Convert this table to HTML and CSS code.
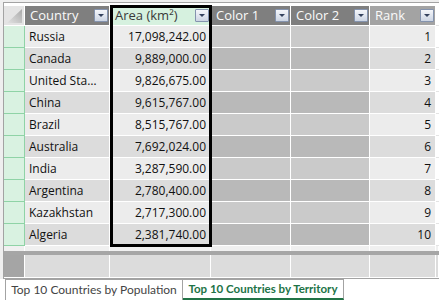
FILE: index.html
```html
<!DOCTYPE html>
<html>
<head>
<meta charset="utf-8">
<link rel="stylesheet" href="styles.css">
</head>
<body>
<div class="sheet">
  <div class="row head">
    <div class="c corner"><svg width="20" height="19" viewBox="0 0 20 19"><defs><linearGradient id="g" x1="0" y1="1" x2="1" y2="0"><stop offset="0" stop-color="#e2e2e2"/><stop offset="1" stop-color="#a9a9a9"/></linearGradient></defs><polygon points="3,17 18,17 18,3" fill="url(#g)"/></svg></div>
    <div class="c h dark"><span>Country</span><i class="dd"></i></div>
    <div class="c h sel"><span>Area (km²)</span><i class="dd"></i></div>
    <div class="c h dark"><span>Color 1</span><i class="dd"></i></div>
    <div class="c h dark"><span>Color 2</span><i class="dd"></i></div>
    <div class="c h mid"><span>Rank</span><i class="dd"></i></div>
    <div class="c h rest"></div>
  </div>
  <div class="row odd"><div class="c rh"></div><div class="c t">Russia</div><div class="c n">17,098,242.00</div><div class="c col"></div><div class="c col"></div><div class="c n">1</div><div class="c rest"></div></div>
  <div class="row even"><div class="c rh"></div><div class="c t">Canada</div><div class="c n">9,889,000.00</div><div class="c col"></div><div class="c col"></div><div class="c n">2</div><div class="c rest"></div></div>
  <div class="row odd"><div class="c rh"></div><div class="c t">United Sta…</div><div class="c n">9,826,675.00</div><div class="c col"></div><div class="c col"></div><div class="c n">3</div><div class="c rest"></div></div>
  <div class="row even"><div class="c rh"></div><div class="c t">China</div><div class="c n">9,615,767.00</div><div class="c col"></div><div class="c col"></div><div class="c n">4</div><div class="c rest"></div></div>
  <div class="row odd"><div class="c rh"></div><div class="c t">Brazil</div><div class="c n">8,515,767.00</div><div class="c col"></div><div class="c col"></div><div class="c n">5</div><div class="c rest"></div></div>
  <div class="row even"><div class="c rh"></div><div class="c t">Australia</div><div class="c n">7,692,024.00</div><div class="c col"></div><div class="c col"></div><div class="c n">6</div><div class="c rest"></div></div>
  <div class="row odd"><div class="c rh"></div><div class="c t">India</div><div class="c n">3,287,590.00</div><div class="c col"></div><div class="c col"></div><div class="c n">7</div><div class="c rest"></div></div>
  <div class="row even"><div class="c rh"></div><div class="c t">Argentina</div><div class="c n">2,780,400.00</div><div class="c col"></div><div class="c col"></div><div class="c n">8</div><div class="c rest"></div></div>
  <div class="row odd"><div class="c rh"></div><div class="c t">Kazakhstan</div><div class="c n">2,717,300.00</div><div class="c col"></div><div class="c col"></div><div class="c n">9</div><div class="c rest"></div></div>
  <div class="row even"><div class="c rh"></div><div class="c t">Algeria</div><div class="c n">2,381,740.00</div><div class="c col"></div><div class="c col"></div><div class="c n">10</div><div class="c rest"></div></div>
  <div class="row spacer"><div class="c"></div><div class="c"></div><div class="c"></div><div class="c"></div><div class="c"></div><div class="c"></div><div class="c"></div></div>
  <div class="band"></div>
  <div class="row total"><div class="c tl"></div><div class="c"></div><div class="c"></div><div class="c"></div><div class="c"></div><div class="c"></div><div class="c"></div></div>
  <div class="selection"></div>
</div>
<div class="tabs">
  <div class="tab first">Top 10 Countries by Population</div>
  <div class="tab active">Top 10 Countries by Territory</div>
</div>
</body>
</html>
```
FILE: styles.css
```css
html, body {
  margin: 0;
  padding: 0;
}
body {
  background: #efefef;
  font-family: "Open Sans", "Noto Sans", sans-serif;
  font-size: 12px;
  color: #111;
  width: 439px;
  height: 303px;
  overflow: hidden;
}
.sheet {
  position: relative;
  margin: 2px 0 0 3px;
  border-top: 1px solid #a3a3a3;
  border-left: 1px solid #a3a3a3;
  border-bottom: 1px solid #a3a3a3;
  background: #fff;
  padding-top: 3px;
}
.row {
  display: grid;
  grid-template-columns: 21px 85px 101px 80px 79px 66px 1fr;
  height: 22px;
}
.c {
  box-sizing: border-box;
  border-right: 1px solid #fff;
  border-bottom: 1px solid #fff;
  line-height: 21px;
  white-space: nowrap;
  overflow: hidden;
}
.head {
  height: 20px;
}
.head .c {
  line-height: 19px;
}
.corner {
  background: #e4e4e4;
}
.corner svg {
  display: block;
}
.h {
  position: relative;
  font-size: 13px;
  padding-left: 5px;
  color: #fafafa;
}
.h.dark {
  background: #7f7f7f;
}
.h.mid {
  background: #a3a3a3;
}
.h.sel {
  background: #d6f1df;
  color: #3a3a3a;
}
.h.rest {
  background: #d9d9d9;
  border-right: 0;
}
.dd {
  position: absolute;
  right: 1px;
  top: 3px;
  width: 14px;
  height: 13px;
  box-sizing: border-box;
  border: 1px solid #8493ae;
  border-radius: 1px;
  background: linear-gradient(#f4f6fa, #cdd5e3);
}
.dd::after {
  content: "";
  position: absolute;
  left: 3px;
  top: 4px;
  border-left: 3px solid transparent;
  border-right: 3px solid transparent;
  border-top: 3px solid #34425e;
}
.rh {
  background: #d9f2e1;
  border-right-color: #8fd3a6;
  border-bottom-color: #8fd3a6;
}
.t {
  padding-left: 4px;
}
.n {
  text-align: right;
  padding-right: 4px;
}
.odd .t, .odd .n {
  background: #ececec;
}
.even .t, .even .n {
  background: #dcdcdc;
}
.odd .col {
  background: #cacaca;
}
.even .col {
  background: #b9b9b9;
}
.row .rest {
  background: #fff;
  border-right: 0;
  border-bottom-color: #e4e4e4;
}
.spacer {
  height: 5px;
}
.spacer .c {
  background: #f0f0f0;
  border-bottom: 0;
}
.band {
  height: 4px;
  background: #a6a6a6;
}
.total {
  height: 23px;
}
.total .c {
  background: #dcdcdc;
  height: 23px;
}
.total .tl {
  background: #a5a5a5;
}
.selection {
  position: absolute;
  left: 106px;
  top: 2px;
  width: 102px;
  height: 242px;
  box-sizing: border-box;
  border: 3px solid #000;
}
.tabs {
  display: flex;
  background: #fff;
  padding-left: 5px;
  height: 24px;
  font-family: Lato, "Open Sans", sans-serif;
}
.tab {
  box-sizing: border-box;
  height: 21px;
  border-top: 1px solid #a3a3a3;
  border-right: 1px solid #a3a3a3;
  text-align: center;
  line-height: 20px;
  font-size: 12px;
  white-space: nowrap;
}
.tab.first {
  width: 178px;
  border-left: 1px solid #a3a3a3;
  color: #444;
}
.tab.active {
  width: 161px;
  color: #217346;
  font-weight: bold;
  border-bottom: 2px solid #217346;
  line-height: 18px;
  font-size: 11.5px;
}
```
